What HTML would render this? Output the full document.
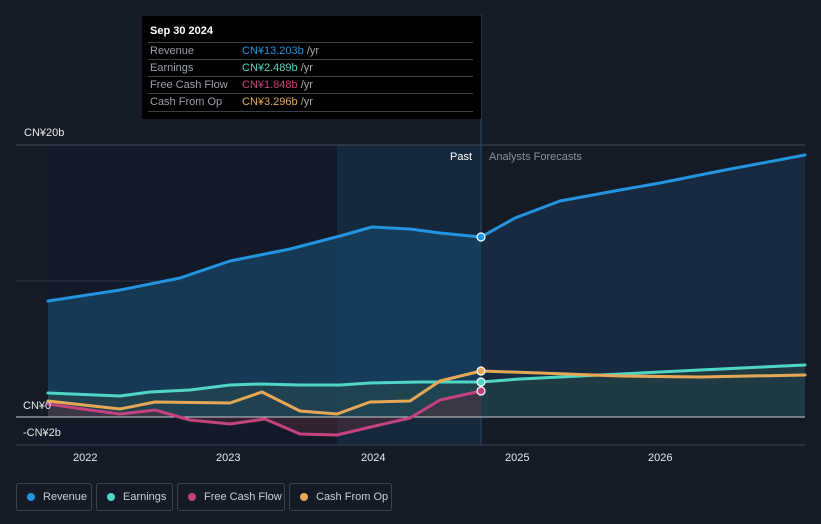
<!DOCTYPE html>
<html><head><meta charset="utf-8"><style>
body{margin:0;background:#151b26;width:821px;height:524px;overflow:hidden;font-family:"Liberation Sans",sans-serif}
svg{position:absolute;left:0;top:0}
.tt{position:absolute;left:142px;top:16px;width:339px;height:103px;background:#000;color:#fff;font-size:11px}
.tt .h{position:absolute;left:8px;top:9px;font-weight:bold;font-size:11px}
.tt .r{position:absolute;left:6px;width:325px;height:17px;border-top:1px solid #3a3f48;line-height:17px}
.tt .r span{position:absolute;left:2px;color:#9aa0a8}
.tt .r b{position:absolute;left:94px;font-weight:normal}
.tt .r i{font-style:normal;color:#aaa}
.leg{position:absolute;top:483px;height:28px;border:1px solid #3a414d;border-radius:3px;color:#c9ced6;font-size:11px;line-height:26px;box-sizing:border-box;white-space:nowrap;padding-left:26px}
.leg:before{content:"";position:absolute;left:10px;top:9px;width:8px;height:8px;border-radius:50%;background:var(--c)}
</style></head><body>
<svg width="821" height="524">
<rect x="48" y="145" width="433" height="300" fill="#121a27"/>
<rect x="337" y="145" width="144" height="300" fill="#16283b"/>
<line x1="16" y1="145" x2="805" y2="145" stroke="#444a55"/>
<line x1="16" y1="281" x2="805" y2="281" stroke="#2a3140"/>
<line x1="481" y1="15" x2="481" y2="445" stroke="#2a4860"/>
<path d="M48,301 L120,290 L180,278 L230,261 L290,249 L340,236 L372,227 L410,229 L440,233 L481,237 L481,417 L48,417Z" fill="#17405f" opacity=".85"/>
<path d="M481,237 L515,218 L560,201 L620,190 L660,183 L720,171 L805,155 L805,417 L481,417Z" fill="#172a40"/>
<path d="M48,393 L120,396 L150,392 L190,390 L230,385 L260,384 L300,385 L340,385 L370,383 L420,382 L481,382 L520,379 L600,375 L700,370 L805,365 L805,417 L48,417Z" fill="#2a4a48" opacity=".5"/>
<path d="M48,404 L90,410 L120,414 L155,410 L190,420 L230,424 L265,419 L300,434 L337,435 L375,426 L410,418 L440,400 L481,391 L481,417 L48,417Z" fill="#5a2a3a" opacity=".45"/>
<line x1="16" y1="417" x2="805" y2="417" stroke="#c8ccd2"/>
<line x1="16" y1="445" x2="805" y2="445" stroke="#3a414d"/>
<g fill="none" stroke-width="3" stroke-linejoin="round" stroke-linecap="round">
<path d="M48,301 L120,290 L180,278 L230,261 L290,249 L340,236 L372,227 L410,229 L440,233 L481,237 L515,218 L560,201 L620,190 L660,183 L720,171 L805,155" stroke="#2394e0"/>
<path d="M48,393 L120,396 L150,392 L190,390 L230,385 L260,384 L300,385 L340,385 L370,383 L420,382 L481,382 L520,379 L600,375 L700,370 L805,365" stroke="#4fd6c4"/>
<path d="M48,404 L90,410 L120,414 L155,410 L190,420 L230,424 L265,419 L300,434 L337,435 L375,426 L410,418 L440,400 L481,391" stroke="#c2437e"/>
<path d="M48,401 L120,409 L155,402 L230,403 L262,392 L300,411 L337,414 L370,402 L410,401 L440,381 L481,371 L540,373 L620,376 L700,377 L805,375" stroke="#e6a856"/>
</g>
<g stroke="#fff" stroke-width="1.2"><circle cx="481" cy="237" r="4" fill="#2394e0"/><circle cx="481" cy="371" r="4" fill="#e6a856"/><circle cx="481" cy="382" r="4" fill="#4fd6c4"/><circle cx="481" cy="391" r="4" fill="#c2437e"/></g>
<g font-size="11" fill="#e6e8eb">
<text x="24" y="136">CN¥20b</text><text x="23" y="409">CN¥0</text><text x="23" y="436">-CN¥2b</text>
<text x="450" y="160" fill="#fff">Past</text><text x="489" y="160" fill="#8a9099">Analysts Forecasts</text>
<text x="73" y="461">2022</text><text x="216" y="461">2023</text><text x="361" y="461">2024</text><text x="505" y="461">2025</text><text x="648" y="461">2026</text>
</g>
</svg>
<div class="tt"><div class="h">Sep 30 2024</div>
<div class="r" style="top:26px"><span>Revenue</span><b style="color:#2394e0">CN¥13.203b <i>/yr</i></b></div>
<div class="r" style="top:43px"><span>Earnings</span><b style="color:#4fd6c4">CN¥2.489b <i>/yr</i></b></div>
<div class="r" style="top:60px"><span>Free Cash Flow</span><b style="color:#c2437e">CN¥1.848b <i>/yr</i></b></div>
<div class="r" style="top:77px;border-bottom:1px solid #3a3f48"><span>Cash From Op</span><b style="color:#e6a856">CN¥3.296b <i>/yr</i></b></div>
</div>
<div class="leg" style="left:16px;width:76px;--c:#2394e0">Revenue</div>
<div class="leg" style="left:96px;width:77px;--c:#4fd6c4">Earnings</div>
<div class="leg" style="left:177px;width:108px;--c:#c2437e">Free Cash Flow</div>
<div class="leg" style="left:289px;width:103px;--c:#e6a856">Cash From Op</div>
</body></html>
